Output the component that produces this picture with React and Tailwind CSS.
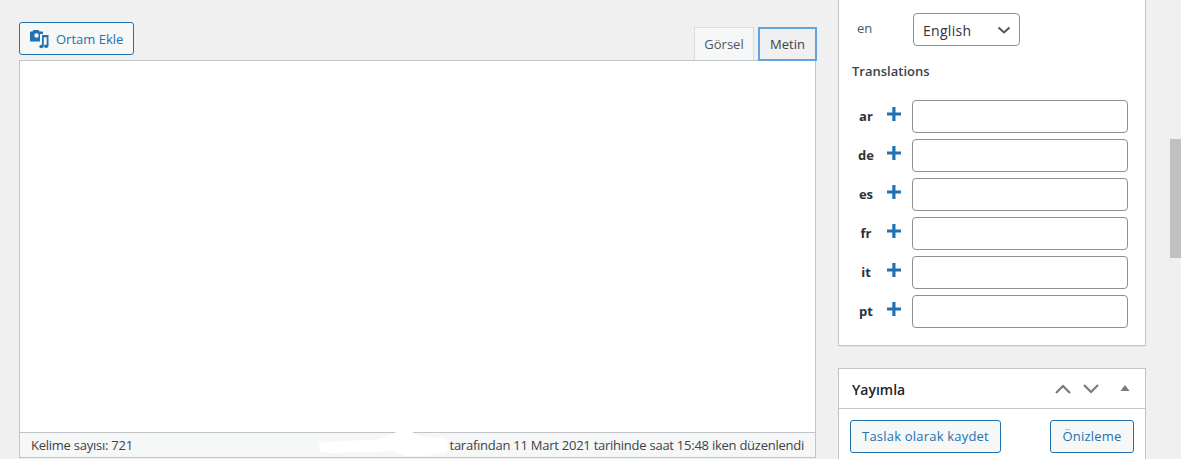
import React from "react";

function MediaIcon() {
  return (
    <svg width="20" height="20" viewBox="0 0 20 20" className="fill-[#2271b1]">
      <path d="M3.500 1h5l1 1.500h2.500c.6 0 1 .4 1 1V5H10.500c-.4 0-.5.2-.5.5V12.500H1c-.6 0-1-.4-1-1V3.500c0-.6.4-1 1-1h1.500zM6.500 4.300a2.200 2.200 0 1 0 0 4.400 2.200 2.200 0 0 0 0-4.400z" fillRule="evenodd" />
      <path d="M12 6h6.500v10.800c0 1.200-1 2.200-2.300 2.200-1.200 0-2.200-.7-2.200-1.700s1-1.800 2.200-1.800c.2 0 .4 0 .5.100V8.300h-2.900v8.700c0 1.200-1 2.200-2.300 2.200-1.200 0-2.200-.7-2.200-1.700s1-1.800 2.200-1.800c.2 0 .4 0 .5.100z" />
    </svg>
  );
}

function Plus() {
  return (
    <svg width="16" height="16" viewBox="0 0 16 16" className="shrink-0 fill-[#2271b1]">
      <path d="M6.300 1h3.200v5.400H15v3.100H9.500V15H6.300V9.500H1V6.400h5.300z" />
    </svg>
  );
}

function Row({ code }) {
  return (
    <div className="flex h-[33px] items-center">
      <span className="w-[28px] text-center text-[13px] font-bold text-[#2c3338]">{code}</span>
      <span className="flex w-[27px] -translate-y-[3px] justify-center"><Plus /></span>
      <input className="ml-[5px] h-[33px] w-[216px] rounded-[4px] border border-[#8c8f94] bg-white" />
    </div>
  );
}

function Scribble() {
  return (
    <svg width="140" height="32" viewBox="0 0 140 32" className="absolute left-[297px] top-[-4px]">
      <path d="M1 14l22-2 35-1 10-3 8-3 5-3h14l2 3 11 3 20 1 3 4-1 10-22 4h-20l-10-5-25 1-40 1-10-2z" className="fill-white" />
    </svg>
  );
}

export default function App() {
  return (
    <div className="relative flex h-[459px] w-[1181px] overflow-hidden bg-[#f0f0f1] font-['Open_Sans','Noto_Sans',sans-serif] text-[13px] text-[#3c434a]">
      <div className="ml-[19px] flex w-[797px] flex-col">
        <div className="flex h-[61px] shrink-0 items-end justify-between">
          <button className="mb-[6px] flex h-[33px] w-[115px] items-center gap-[6px] rounded-[3px] border border-[#2271b1] bg-[#f6f7f7] pl-[10px] text-[13px] text-[#2271b1]">
            <MediaIcon />
            <span className="translate-y-[1px]">Ortam Ekle</span>
          </button>
          <div className="z-10 -mr-[1px] flex gap-[4px]">
            <div className="flex h-[33px] w-[60px] items-center justify-center border border-b-0 border-[#dcdcde] bg-[#f6f7f7] pt-[2px] text-[#50575e]">Görsel</div>
            <div className="flex h-[34px] w-[59px] items-center justify-center border-2 border-[#63a4e0] bg-[#f0f0f1] pt-[1px] text-[#3c434a]">Metin</div>
          </div>
        </div>
        <div className="-mt-[1px] flex h-[398px] flex-col border border-[#c3c4c7] bg-white">
          <div className="flex-1" />
          <div className="relative flex h-[25px] items-center justify-between border-t border-[#c3c4c7] bg-[#f6f7f7] px-[11px] pt-[2px] text-[13px] tracking-[-0.25px] text-[#3c434a]">
            <span>Kelime sayısı: 721</span>
            <Scribble />
            <span className="relative">tarafından 11 Mart 2021 tarihinde saat 15:48 iken düzenlendi</span>
          </div>
        </div>
      </div>

      <div className="ml-[22px] flex w-[308px] flex-col gap-[22px]">
        <div className="h-[346px] shrink-0 border border-t-0 border-[#c3c4c7] bg-white shadow-[0_1px_1px_rgba(0,0,0,0.04)]">
          <div className="flex pt-[13px]">
            <span className="ml-[18px] mt-[6px] w-[56px] text-[13px] leading-[18px] text-[#50575e]">en</span>
            <div className="flex h-[33px] w-[107px] items-center justify-between rounded-[4px] border border-[#8c8f94] bg-white pl-[9px] pr-[7px] text-[14px] tracking-[0.3px] text-[#2c3338]">
              <span className="translate-y-[1px]">English</span>
              <svg width="16" height="16" viewBox="0 0 16 16" fill="none" stroke="#50575e" strokeWidth="2"><path d="M2.500 5.500 8 10.500l5.500-5" /></svg>
            </div>
          </div>
          <div className="ml-[13px] mt-[15px] h-[39px] text-[13px] font-semibold leading-[20px] text-[#3c434a]">Translations</div>
          <div className="flex flex-col gap-[6px] pl-[13px]">
            {["ar", "de", "es", "fr", "it", "pt"].map((c) => <Row key={c} code={c} />)}
          </div>
        </div>
        <div className="h-[120px] shrink-0 border border-[#c3c4c7] bg-white">
          <div className="flex h-[40px] items-center justify-between border-b border-[#c3c4c7] pl-[13px] pr-[15px]">
            <span className="translate-y-[1px] text-[14px] font-semibold text-[#1d2327]">Yayımla</span>
            <div className="flex items-center gap-[12px]">
              <svg width="16" height="12" viewBox="0 0 16 12" fill="none" stroke="#787c82" strokeWidth="2.200"><path d="M1 10 8 3l7 7" /></svg>
              <svg width="16" height="12" viewBox="0 0 16 12" fill="none" stroke="#787c82" strokeWidth="2.200"><path d="M1 2l7 7 7-7" /></svg>
              <svg width="10" height="12" viewBox="0 0 10 12" className="ml-[9px] fill-[#787c82]"><path d="M5 2l4.500 6H.5z" /></svg>
            </div>
          </div>
          <div className="flex justify-between pl-[11px] pr-[11px] pt-[11px]">
            <button className="flex h-[33px] w-[151px] items-center justify-center rounded-[3px] border border-[#2271b1] bg-[#f6f7f7] text-[13px] tracking-[0.2px] text-[#2271b1]">Taslak olarak kaydet</button>
            <button className="flex h-[33px] w-[84px] items-center justify-center rounded-[3px] border border-[#2271b1] bg-[#f6f7f7] text-[13px] tracking-[0.2px] text-[#2271b1]">Önizleme</button>
          </div>
        </div>
      </div>

      <div className="absolute right-0 top-[139px] h-[119px] w-[11px] bg-[#c1c1c1]" />
    </div>
  );
}
